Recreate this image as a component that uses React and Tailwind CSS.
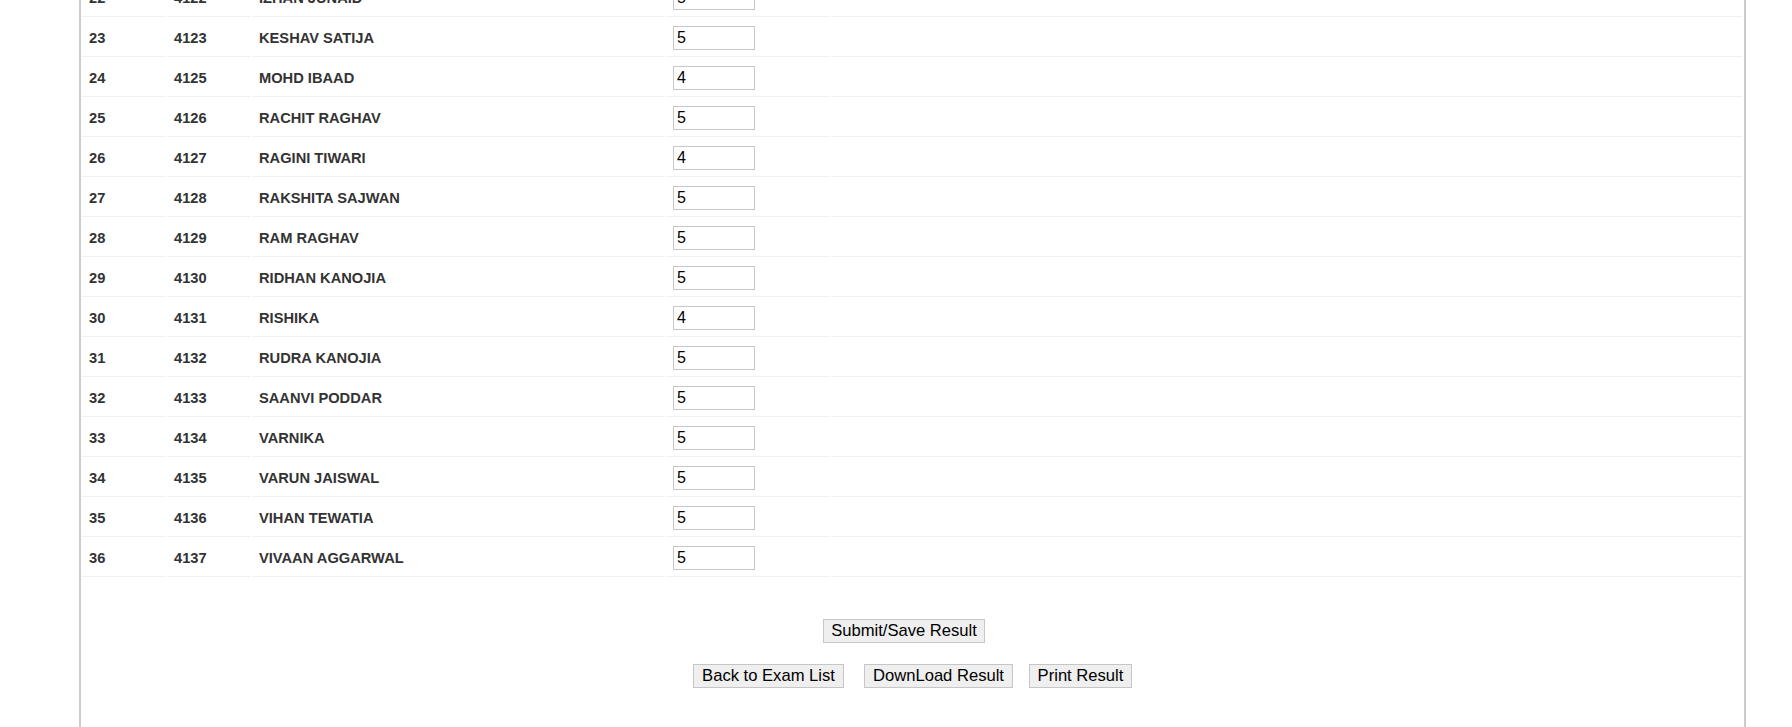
import React from 'react';

const rows = [
  [22, 4122, 'IZHAN JUNAID', '5'],
  [23, 4123, 'KESHAV SATIJA', '5'],
  [24, 4125, 'MOHD IBAAD', '4'],
  [25, 4126, 'RACHIT RAGHAV', '5'],
  [26, 4127, 'RAGINI TIWARI', '4'],
  [27, 4128, 'RAKSHITA SAJWAN', '5'],
  [28, 4129, 'RAM RAGHAV', '5'],
  [29, 4130, 'RIDHAN KANOJIA', '5'],
  [30, 4131, 'RISHIKA', '4'],
  [31, 4132, 'RUDRA KANOJIA', '5'],
  [32, 4133, 'SAANVI PODDAR', '5'],
  [33, 4134, 'VARNIKA', '5'],
  [34, 4135, 'VARUN JAISWAL', '5'],
  [35, 4136, 'VIHAN TEWATIA', '5'],
  [36, 4137, 'VIVAAN AGGARWAL', '5'],
];

function Button({ children, className }) {
  return (
    <button
      type="button"
      className={`h-[24px] bg-[#efefef] border border-[#c6c6c6] text-[16.6px] leading-none text-black text-center whitespace-nowrap ${className}`}
    >
      {children}
    </button>
  );
}

function ResultRow({ sno, roll, name, marks }) {
  const cell = 'h-[38px] border-b border-[#f0f0f0] px-[7px] align-middle';
  return (
    <tr className="text-[14.67px] font-bold text-[#333]">
      <td className={cell}>{sno}</td>
      <td className={cell}>{roll}</td>
      <td className={cell}>{name}</td>
      <td className="h-[38px] border-b border-[#f0f0f0] pl-[6px] align-middle">
        <input
          type="text"
          defaultValue={marks}
          className="block w-[82px] h-[24px] border border-[#c8c8c8] px-[3px] text-[16px] font-normal text-black outline-none"
        />
      </td>
      <td className={cell}></td>
    </tr>
  );
}

export default function App() {
  return (
    <div className="h-[727px] overflow-hidden bg-white" style={{ fontFamily: '"Liberation Sans", Arial, sans-serif' }}>
      <div className="flow-root ml-[79px] w-[1667px] h-full border-x-2 border-[#cccccc]">
        <table className="-mt-[23px] -ml-px w-[1664px] table-fixed border-separate border-spacing-[2px]">
          <colgroup>
            <col className="w-[83px]" />
            <col className="w-[83px]" />
            <col className="w-[413px]" />
            <col className="w-[162px]" />
            <col />
          </colgroup>
          <tbody>
            {rows.map(([sno, roll, name, marks]) => (
              <ResultRow key={sno} sno={sno} roll={roll} name={name} marks={marks} />
            ))}
          </tbody>
        </table>

        <div className="mt-[40px] flex justify-center pr-[17px]">
          <Button className="w-[162px]">Submit/Save Result</Button>
        </div>
        <div className="mt-[21px] flex justify-center">
          <Button className="w-[151px]">Back to Exam List</Button>
          <Button className="ml-[20px] w-[149px]">DownLoad Result</Button>
          <Button className="ml-[16px] w-[103px]">Print Result</Button>
        </div>
      </div>
    </div>
  );
}
